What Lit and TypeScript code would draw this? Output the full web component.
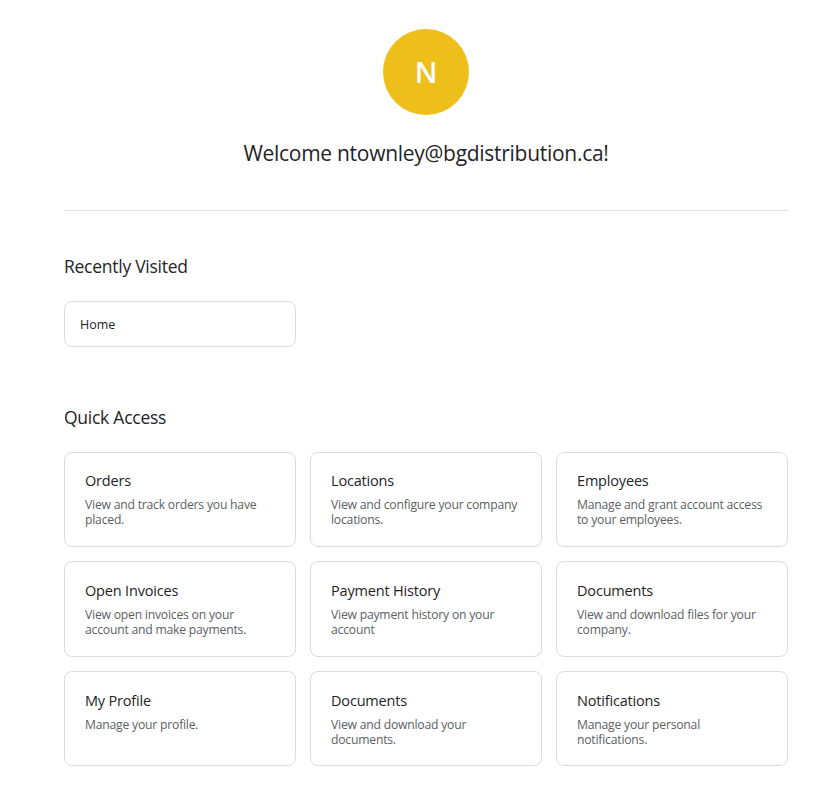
import { LitElement, html, css } from "lit";
import { customElement } from "lit/decorators.js";

const cards = [
  ["Orders", "View and track orders you have placed."],
  ["Locations", "View and configure your company locations."],
  ["Employees", "Manage and grant account access to your employees."],
  ["Open Invoices", "View open invoices on your account and make payments."],
  ["Payment History", "View payment history on your account"],
  ["Documents", "View and download files for your company."],
  ["My Profile", "Manage your profile."],
  ["Documents", "View and download your documents."],
  ["Notifications", "Manage your personal notifications."],
];

@customElement("app-root")
export class AppRoot extends LitElement {
  static styles = css`
    :host { display: block; background: #fff; color: #1f2328; font-family: "Open Sans", "Noto Sans", sans-serif; }
    .page { padding: 29px 39px 21px 64px; display: flex; flex-direction: column; }
    .hero { display: flex; flex-direction: column; align-items: center; gap: 22px; padding-bottom: 41px; border-bottom: 1px solid #e0e0e0; }
    .avatar { width: 86px; height: 86px; border-radius: 50%; background: #eebf1a; color: #fff; font-size: 29px; font-weight: 600; line-height: 86px; text-align: center; }
    .welcome { margin: 0; font-size: 21px; font-weight: 400; line-height: 32px; letter-spacing: -0.28px; }
    h2 { margin: 0; font-size: 17.5px; font-weight: 400; line-height: 24px; letter-spacing: -0.26px; }
    .recent { margin-top: 43px; }
    .home { margin-top: 23px; width: 232px; height: 46px; box-sizing: border-box; border: 1px solid #dcdcdc; border-radius: 8px; display: flex; align-items: center; padding: 0 15px; font-size: 12.5px; letter-spacing: -0.05px; }
    .quick { margin-top: 58px; }
    .grid { margin-top: 22.6px; display: grid; grid-template-columns: repeat(3, 1fr); column-gap: 14px; row-gap: 14.5px; }
    .card { height: 95.25px; box-sizing: border-box; border: 1px solid #dcdcdc; border-radius: 8px; padding: 0 20px; }
    .title { font-size: 14.5px; line-height: 20px; margin-top: 18.6px; letter-spacing: -0.18px; }
    .desc { font-size: 12.2px; line-height: 15px; margin-top: 6px; color: #5c5f63; letter-spacing: -0.22px; }
  `;
  render() {
    return html`<div class="page">
      <div class="hero"><div class="avatar">N</div><h1 class="welcome">Welcome ntownley@bgdistribution.ca!</h1></div>
      <section class="recent"><h2>Recently Visited</h2><div class="home">Home</div></section>
      <section class="quick"><h2>Quick Access</h2>
        <div class="grid">${cards.map(([t, d]) => html`<div class="card"><div class="title">${t}</div><div class="desc">${d}</div></div>`)}</div>
      </section>
    </div>`;
  }
}
